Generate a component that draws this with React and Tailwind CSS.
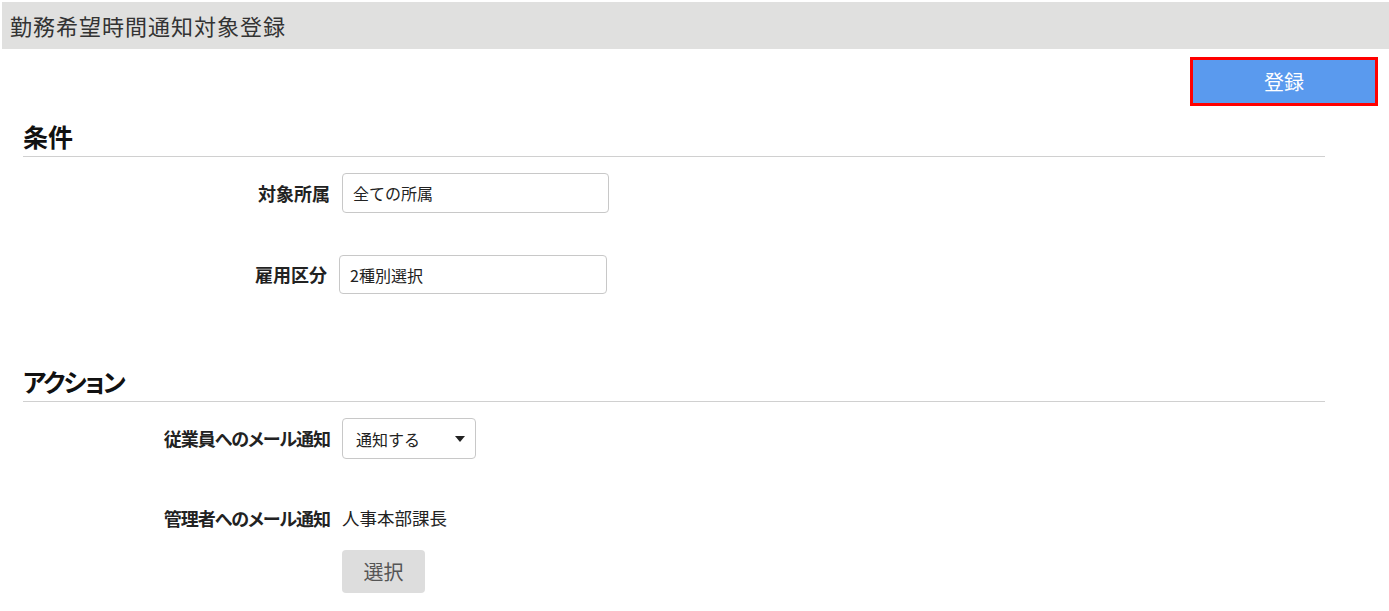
import React from 'react';

const font = { fontFamily: '"Noto Sans CJK JP", "Noto Sans", sans-serif' };

function Label({ children, width = 'w-[330px]', tight = false }) {
  return (
    <div
      className={`${width} shrink-0 text-right text-[18px] font-bold text-[#222] [font-feature-settings:'palt'] ${
        tight ? 'tracking-[-1px]' : ''
      }`}
    >
      {children}
    </div>
  );
}

function SectionTitle({ children, tight = false }) {
  return (
    <div className="ml-[23px] mr-[64px] border-b border-[#d0d0d0] pb-[4px]">
      <h2
        className={`h-[32px] text-[25px] font-bold leading-[32px] text-[#111] [font-feature-settings:'palt'] ${
          tight ? 'tracking-[-2px]' : ''
        }`}
      >
        {children}
      </h2>
    </div>
  );
}

export default function App() {
  return (
    <div className="min-h-screen bg-white pt-[2px]" style={font}>
      {/* header */}
      <div className="ml-[2px] flex h-[47px] items-center bg-[#e0e0df] px-[8px] text-[22px] tracking-[1px] text-[#333]">
        勤務希望時間通知対象登録
      </div>

      <div className="mt-[8px] flex justify-end pr-[11px]">
        <button className="h-[49px] w-[188px] border-[3px] border-[#ff0000] bg-[#5a9aee] text-[20px] text-white">
          登録
        </button>
      </div>

      {/* 条件 */}
      <div className="mt-[14px]">
        <SectionTitle>条件</SectionTitle>

        <div className="mt-[16px] flex items-center">
          <Label>対象所属</Label>
          <div className="ml-[12px] flex h-[40px] w-[267px] items-center rounded-[4px] border border-[#c8c8c8] px-[10px] text-[16px] text-[#222]">
            全ての所属
          </div>
        </div>

        <div className="mt-[42px] flex items-center">
          <Label width="w-[327px]">雇用区分</Label>
          <div className="ml-[12px] flex h-[39px] w-[268px] items-center rounded-[4px] border border-[#c8c8c8] px-[10px] text-[16px] text-[#222]">
            2種別選択
          </div>
        </div>
      </div>

      {/* アクション */}
      <div className="mt-[71px]">
        <SectionTitle tight>アクション</SectionTitle>

        <div className="mt-[16px] flex items-center">
          <Label tight>従業員へのメール通知</Label>
          <div className="ml-[12px] flex h-[41px] w-[134px] items-center justify-between rounded-[4px] border border-[#c8c8c8] pl-[13px] pr-[10px] text-[16px] text-[#222]">
            <span>通知する</span>
            <svg width="10" height="6" viewBox="0 0 10 6">
              <path d="M0 0h10L5 6z" fill="#222" />
            </svg>
          </div>
        </div>

        <div className="mt-[47px] flex h-[24px] items-center">
          <Label tight>管理者へのメール通知</Label>
          <div className="ml-[12px] text-[17.5px] text-[#222]">人事本部課長</div>
        </div>

        <div className="mt-[20px] pl-[342px]">
          <button className="h-[43px] w-[83px] rounded-[4px] bg-[#dddddd] text-[20px] text-[#555]">
            選択
          </button>
        </div>
      </div>
    </div>
  );
}
